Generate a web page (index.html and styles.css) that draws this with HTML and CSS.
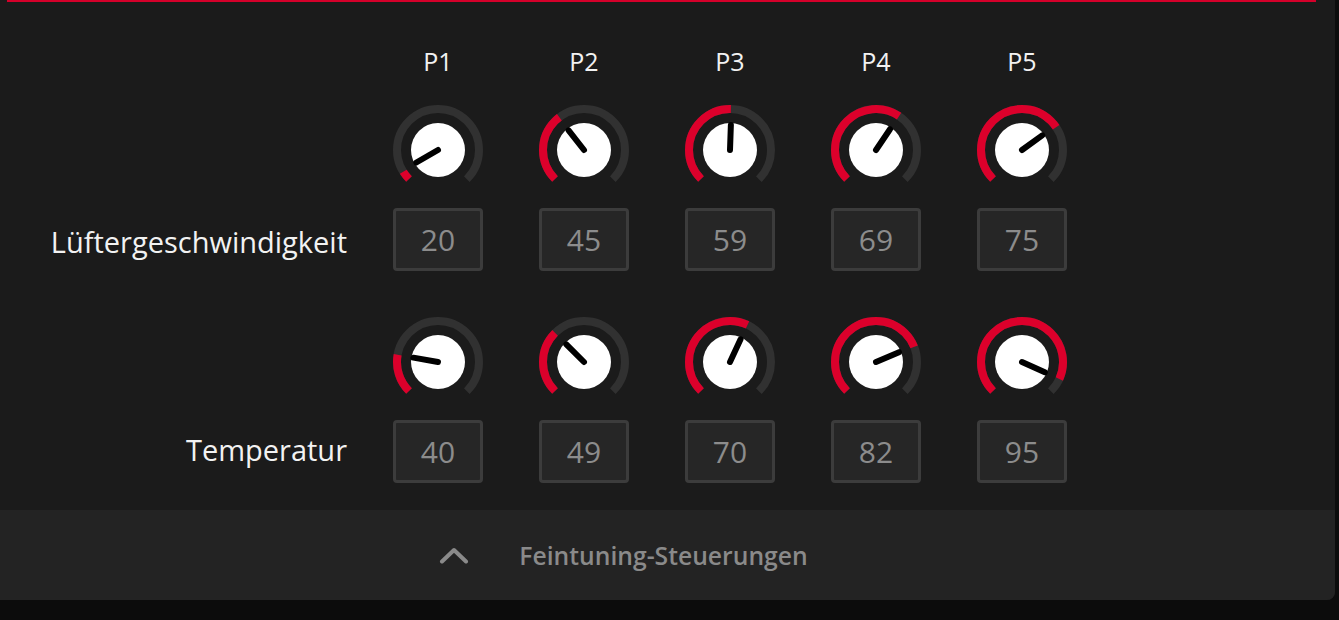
FILE: index.html
```html
<!DOCTYPE html>
<html lang="de">
<head>
<meta charset="utf-8">
<title>Lüfterkurve</title>
<link rel="stylesheet" href="styles.css">
</head>
<body>
<div class="panel">
  <div class="topline"></div>
  <div class="grid">
    <div class="head c1">P1</div>
    <div class="head c2">P2</div>
    <div class="head c3">P3</div>
    <div class="head c4">P4</div>
    <div class="head c5">P5</div>

    <!-- Fan speed knobs -->
    <div class="knob r2 c1"><svg viewBox="0 0 92 92" width="92" height="92"><circle class="track" cx="46" cy="46" r="41" stroke-dasharray="193.2 400" transform="rotate(135 46 46)"/><circle class="fill" cx="46" cy="46" r="41" stroke-dasharray="9.3 400" transform="rotate(135 46 46)"/><circle class="cap" cx="46" cy="46" r="27"/><line class="ptr" x1="46" y1="46" x2="46" y2="21" transform="rotate(-120 46 46)"/></svg></div>
    <div class="knob r2 c2"><svg viewBox="0 0 92 92" width="92" height="92"><circle class="track" cx="46" cy="46" r="41" stroke-dasharray="193.2 400" transform="rotate(135 46 46)"/><circle class="fill" cx="46" cy="46" r="41" stroke-dasharray="70.1 400" transform="rotate(135 46 46)"/><circle class="cap" cx="46" cy="46" r="27"/><line class="ptr" x1="46" y1="46" x2="46" y2="21" transform="rotate(-38 46 46)"/></svg></div>
    <div class="knob r2 c3"><svg viewBox="0 0 92 92" width="92" height="92"><circle class="track" cx="46" cy="46" r="41" stroke-dasharray="193.2 400" transform="rotate(135 46 46)"/><circle class="fill" cx="46" cy="46" r="41" stroke-dasharray="97.3 400" transform="rotate(135 46 46)"/><circle class="cap" cx="46" cy="46" r="27"/><line class="ptr" x1="46" y1="46" x2="46" y2="21" transform="rotate(2 46 46)"/></svg></div>
    <div class="knob r2 c4"><svg viewBox="0 0 92 92" width="92" height="92"><circle class="track" cx="46" cy="46" r="41" stroke-dasharray="193.2 400" transform="rotate(135 46 46)"/><circle class="fill" cx="46" cy="46" r="41" stroke-dasharray="120.9 400" transform="rotate(135 46 46)"/><circle class="cap" cx="46" cy="46" r="27"/><line class="ptr" x1="46" y1="46" x2="46" y2="21" transform="rotate(34 46 46)"/></svg></div>
    <div class="knob r2 c5"><svg viewBox="0 0 92 92" width="92" height="92"><circle class="track" cx="46" cy="46" r="41" stroke-dasharray="193.2 400" transform="rotate(135 46 46)"/><circle class="fill" cx="46" cy="46" r="41" stroke-dasharray="136.7 400" transform="rotate(135 46 46)"/><circle class="cap" cx="46" cy="46" r="27"/><line class="ptr" x1="46" y1="46" x2="46" y2="21" transform="rotate(54 46 46)"/></svg></div>

    <div class="label r3">Lüftergeschwindigkeit</div>
    <div class="box r3 c1">20</div>
    <div class="box r3 c2">45</div>
    <div class="box r3 c3">59</div>
    <div class="box r3 c4">69</div>
    <div class="box r3 c5">75</div>

    <!-- Temperature knobs -->
    <div class="knob r4 c1"><svg viewBox="0 0 92 92" width="92" height="92"><circle class="track" cx="46" cy="46" r="41" stroke-dasharray="193.2 400" transform="rotate(135 46 46)"/><circle class="fill" cx="46" cy="46" r="41" stroke-dasharray="39.4 400" transform="rotate(135 46 46)"/><circle class="cap" cx="46" cy="46" r="27"/><line class="ptr" x1="46" y1="46" x2="46" y2="21" transform="rotate(-80 46 46)"/></svg></div>
    <div class="knob r4 c2"><svg viewBox="0 0 92 92" width="92" height="92"><circle class="track" cx="46" cy="46" r="41" stroke-dasharray="193.2 400" transform="rotate(135 46 46)"/><circle class="fill" cx="46" cy="46" r="41" stroke-dasharray="64.4 400" transform="rotate(135 46 46)"/><circle class="cap" cx="46" cy="46" r="27"/><line class="ptr" x1="46" y1="46" x2="46" y2="21" transform="rotate(-45 46 46)"/></svg></div>
    <div class="knob r4 c3"><svg viewBox="0 0 92 92" width="92" height="92"><circle class="track" cx="46" cy="46" r="41" stroke-dasharray="193.2 400" transform="rotate(135 46 46)"/><circle class="fill" cx="46" cy="46" r="41" stroke-dasharray="114.5 400" transform="rotate(135 46 46)"/><circle class="cap" cx="46" cy="46" r="27"/><line class="ptr" x1="46" y1="46" x2="46" y2="21" transform="rotate(25 46 46)"/></svg></div>
    <div class="knob r4 c4"><svg viewBox="0 0 92 92" width="92" height="92"><circle class="track" cx="46" cy="46" r="41" stroke-dasharray="193.2 400" transform="rotate(135 46 46)"/><circle class="fill" cx="46" cy="46" r="41" stroke-dasharray="145.3 400" transform="rotate(135 46 46)"/><circle class="cap" cx="46" cy="46" r="27"/><line class="ptr" x1="46" y1="46" x2="46" y2="21" transform="rotate(67 46 46)"/></svg></div>
    <div class="knob r4 c5"><svg viewBox="0 0 92 92" width="92" height="92"><circle class="track" cx="46" cy="46" r="41" stroke-dasharray="193.2 400" transform="rotate(135 46 46)"/><circle class="fill" cx="46" cy="46" r="41" stroke-dasharray="178.2 400" transform="rotate(135 46 46)"/><circle class="cap" cx="46" cy="46" r="27"/><line class="ptr" x1="46" y1="46" x2="46" y2="21" transform="rotate(114 46 46)"/></svg></div>

    <div class="label label-temp r5">Temperatur</div>
    <div class="box r5 c1">40</div>
    <div class="box r5 c2">49</div>
    <div class="box r5 c3">70</div>
    <div class="box r5 c4">82</div>
    <div class="box r5 c5">95</div>
  </div>
  <div class="footer">
    <svg class="chev" viewBox="0 0 30 18" width="30" height="18"><polyline points="3,15.5 15,4 27,15.5"/></svg>
    <span class="footer-text">Feintuning-Steuerungen</span>
  </div>
</div>
</body>
</html>
```
FILE: styles.css
```css
* { box-sizing: border-box; }
html, body { margin: 0; padding: 0; }
body {
  background: #0c0c0c;
  width: 1339px;
  height: 620px;
  overflow: hidden;
  font-family: "Open Sans", "Noto Sans", "Liberation Sans", sans-serif;
}
.panel {
  width: 1335px;
  height: 600px;
  background: #1b1b1b;
  border-bottom-right-radius: 8px;
  display: flex;
  flex-direction: column;
  overflow: hidden;
}
.topline {
  height: 2px;
  margin: 0 19px 0 7px;
  background: #d4002a;
  flex: none;
}
.grid {
  flex: 1;
  display: grid;
  grid-template-columns: 365px repeat(5, 146px);
  grid-template-rows: 36px 117px 75px 137px 75px;
  padding-top: 41px;
}
.c1 { grid-column: 2; }
.c2 { grid-column: 3; }
.c3 { grid-column: 4; }
.c4 { grid-column: 5; }
.c5 { grid-column: 6; }
.r2 { grid-row: 2; }
.r3 { grid-row: 3; }
.r4 { grid-row: 4; }
.r5 { grid-row: 5; }
.head {
  grid-row: 1;
  justify-self: center;
  align-self: center;
  color: #f2f2f2;
  font-size: 25px;
  line-height: 36px;
}
.knob {
  justify-self: center;
  align-self: end;
  width: 92px;
  height: 92px;
}
.knob svg { display: block; }
.track, .fill {
  fill: none;
  stroke-width: 8;
}
.track { stroke: #313131; }
.fill { stroke: #dc002b; }
.cap { fill: #ffffff; }
.ptr {
  stroke: #000000;
  stroke-width: 6;
  stroke-linecap: round;
}
.box {
  justify-self: center;
  align-self: end;
  width: 90px;
  height: 63px;
  border: 3px solid #3c3c3c;
  border-radius: 4px;
  background: #262626;
  color: #8c8c8c;
  font-size: 30px;
  display: flex;
  align-items: center;
  justify-content: center;
}
.label {
  grid-column: 1;
  align-self: end;
  height: 63px;
  display: flex;
  align-items: center;
  justify-content: flex-end;
  padding-right: 18px;
  padding-top: 3px;
  color: #f2f2f2;
  font-size: 29px;
}
.label-temp {
  padding-top: 0;
  padding-bottom: 4px;
}
.footer {
  flex: none;
  height: 90px;
  background: #232323;
  display: flex;
  align-items: center;
  justify-content: center;
  gap: 50px;
  padding-right: 8px;
}
.footer::after {
  content: "";
  width: 30px;
}
.chev { display: block; }
.chev polyline {
  fill: none;
  stroke: #8a8a8a;
  stroke-width: 4;
  stroke-linecap: round;
  stroke-linejoin: round;
}
.footer-text {
  color: #8a8a8a;
  font-size: 24.7px;
  font-weight: 600;
}
```
